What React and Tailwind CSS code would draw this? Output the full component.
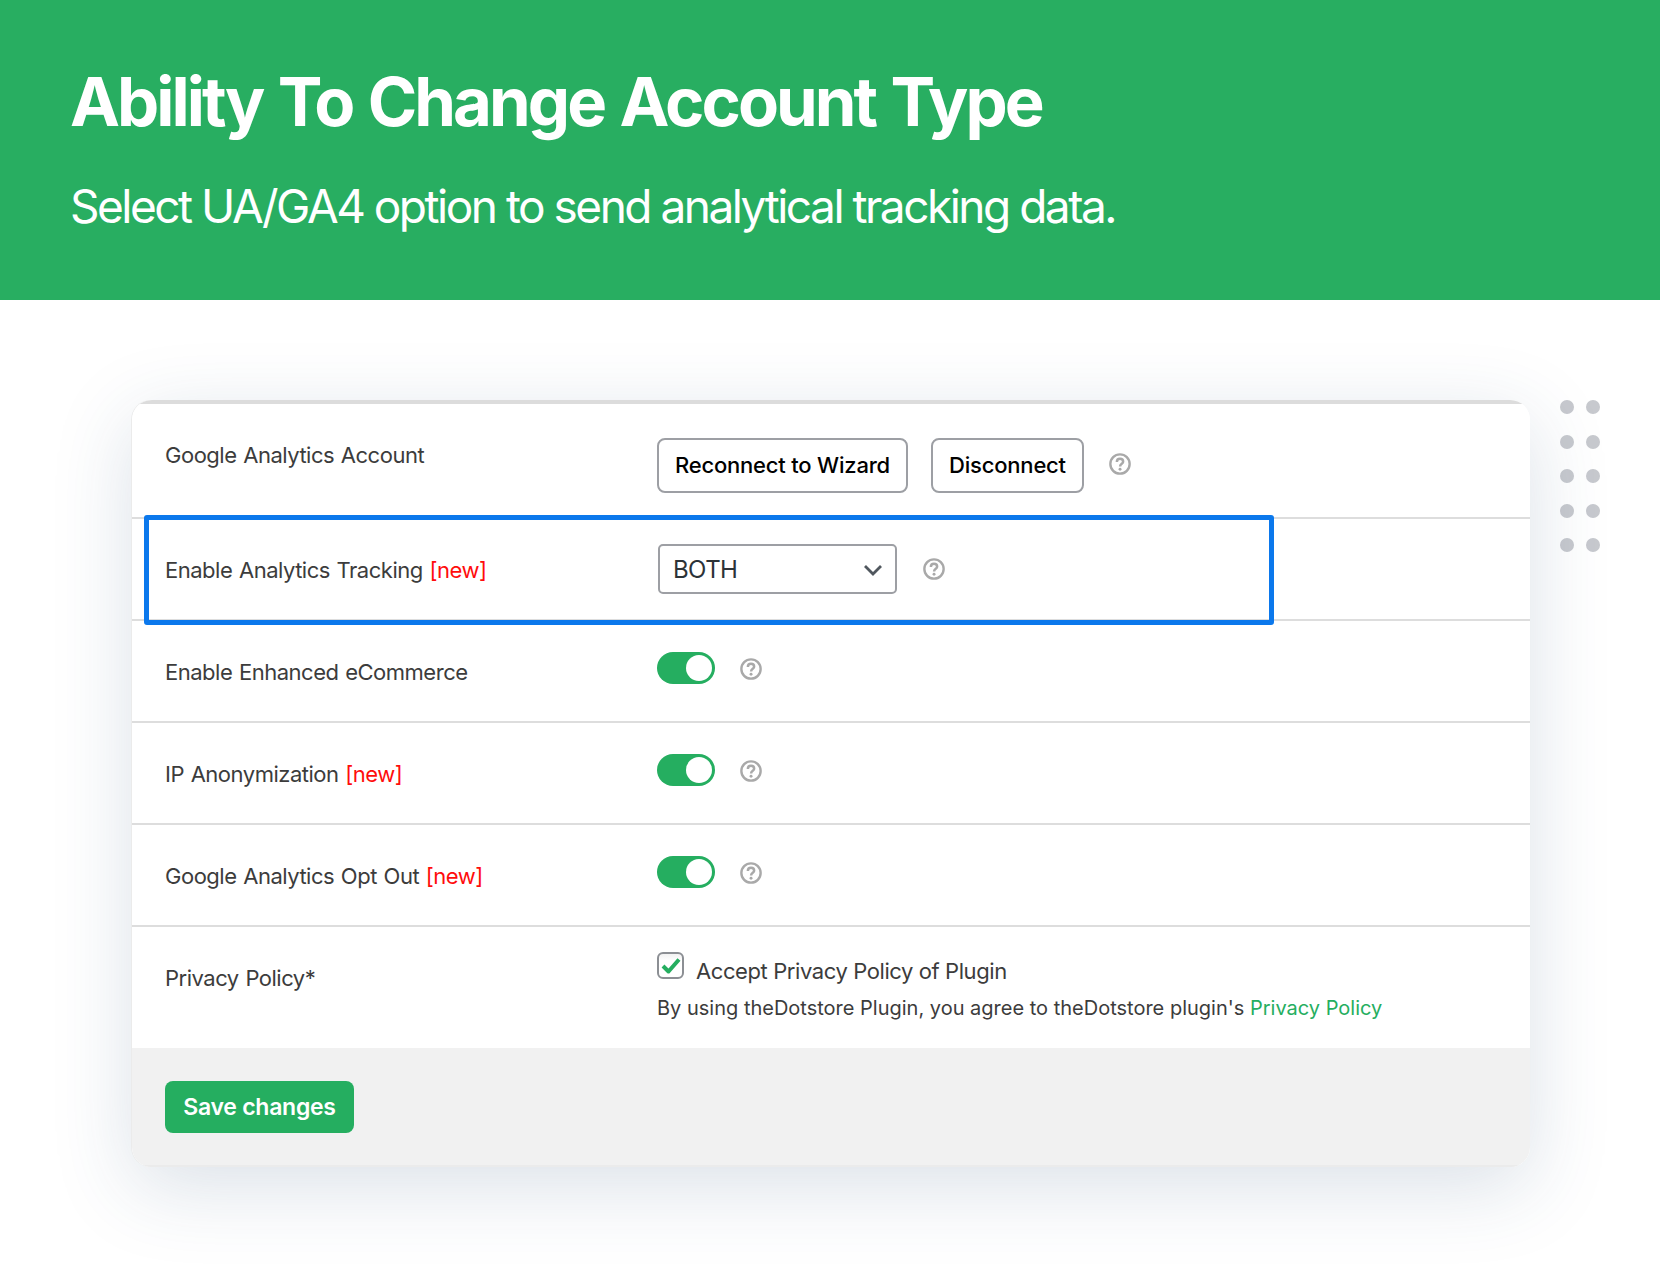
import React from "react";

function Help({ className = "" }) {
  return (
    <svg viewBox="0 0 24 24" className={`h-[26px] w-[26px] shrink-0 ${className}`} fill="none" stroke="#a9a9a9" strokeWidth="2.2">
      <circle cx="12" cy="12" r="8.9" />
      <path d="M9.100 10.100C9.100 8.300 10.400 7.200 12 7.200s2.900 1.100 2.900 2.700c0 1.900-2.800 2-2.800 4.300" strokeWidth="2.300" />
      <circle cx="12.050" cy="16.800" r="1.350" fill="#a9a9a9" stroke="none" />
    </svg>
  );
}

function Row({ label, isNew, className = "h-[102px] border-b-2", labelClass = "pt-[38px]", children }) {
  return (
    <div className={`flex border-[#dddddd] pl-[33px] ${className}`}>
      <div className={`w-[492px] shrink-0 whitespace-nowrap text-[22px] leading-[26px] tracking-[-0.49px] [word-spacing:1px] text-[#3c3c3c] ${labelClass}`}>
        <span>{label}</span>
        {isNew && <span className="text-[#ff0c0c]"> [new]</span>}
      </div>
      {children}
    </div>
  );
}

function Toggle() {
  return (
    <div className="flex pt-[31px]">
      <div className="flex h-8 w-[58px] justify-end rounded-full bg-[#25ae60] p-[3px]">
        <div className="h-[26px] w-[26px] rounded-full bg-white" />
      </div>
      <Help className="ml-[23px] mt-1" />
    </div>
  );
}

export default function App() {
  return (
    <div className="relative h-[1268px] w-[1660px] overflow-hidden bg-white font-['Inter',sans-serif]">
      <header className="h-[300px] bg-[#28ae61] pl-[70px] pt-[62px] text-white">
        <h1 className="whitespace-nowrap text-[67px] font-bold leading-[80px] tracking-[-2.95px] [word-spacing:2.4px]"><span>Ability To Change Account Type</span></h1>
        <p className="mt-[36px] whitespace-nowrap text-[46px] font-normal leading-[56px] tracking-[-2.5px]"><span>Select UA/GA4 option to send analytical tracking data.</span></p>
      </header>

      <div className="flex pl-[132px] pt-[100px]">
        <main className="relative h-[767px] w-[1398px] rounded-[20px] shadow-[-1px_0_0_#ebebeb,0_20px_80px_rgba(40,75,120,0.17)]">
          <div className="h-full overflow-hidden rounded-[20px] bg-white">
            <div className="h-1 bg-[#dcdcdc]" />
            <Row label="Google Analytics Account" className="h-[115px] border-b-2" labelClass="pt-[38px]">
              <div className="flex pt-[34px]">
                <button className="h-[55px] w-[251px] rounded-lg border-2 border-[#9d9fa4] text-[22px] font-medium tracking-[-0.2px] text-black"><span>Reconnect to Wizard</span></button>
                <button className="ml-[23px] h-[55px] w-[153px] rounded-lg border-2 border-[#9d9fa4] text-[22px] font-medium tracking-[-0.2px] text-black"><span>Disconnect</span></button>
                <Help className="ml-[23px] mt-[13px]" />
              </div>
            </Row>
            <Row label="Enable Analytics Tracking" isNew>
              <div className="flex pl-[1px] pt-[25px]">
                <div className="flex h-[50px] w-[239px] items-center justify-between rounded-[5px] border-2 border-[#9d9fa4] pl-[13px] pr-[12px] pt-px text-[24px] tracking-[-0.6px] text-[#2c3338]">
                  <span>BOTH</span>
                  <svg viewBox="0 0 20 12" className="mt-px h-[12px] w-[20px]" fill="none" stroke="#50575e" strokeWidth="2.800"><path d="M2 2l8 8 8-8" /></svg>
                </div>
                <Help className="ml-[24px] mt-[12px]" />
              </div>
            </Row>
            <Row label="Enable Enhanced eCommerce"><Toggle /></Row>
            <Row label="IP Anonymization" isNew><Toggle /></Row>
            <Row label="Google Analytics Opt Out" isNew><Toggle /></Row>
            <Row label="Privacy Policy*" className="h-[121px]">
              <div className="pt-[25px] text-[#3c3c3c]">
                <div className="flex">
                  <div className="flex h-[27px] w-[27px] items-center justify-center rounded-md border-2 border-[#8c8f94] bg-linear-to-b from-[#f2f2f2] to-white to-30%">
                    <svg viewBox="0 0 20 18" className="h-[18px] w-[20px] shrink-0" fill="none" stroke="#25ae60" strokeWidth="4" strokeLinejoin="round"><path d="M2 9l5.500 5.500L18 2.500" /></svg>
                  </div>
                  <span className="ml-[12px] mt-[6px] text-[22px] leading-[26px] tracking-[-0.41px]">Accept Privacy Policy of Plugin</span>
                </div>
                <p className="mt-[12px] whitespace-nowrap text-[20px] leading-[24px]"><span>By using theDotstore Plugin, you agree to theDotstore plugin's </span><span className="text-[#25ae60]">Privacy Policy</span></p>
              </div>
            </Row>
            <div className="h-[119px] border-b-2 border-[#ebebeb] bg-[#f1f1f1] pl-[33px] pt-[33px]">
              <button className="h-[52px] w-[189px] rounded-lg bg-[#25ae60] text-[23px] font-semibold tracking-[-0.27px] text-white"><span>Save changes</span></button>
            </div>
          </div>
          <div className="absolute left-[12px] top-[115px] h-[110px] w-[1130px] rounded-[3px] border-5 border-[#0b78ec]" />
        </main>
        <div className="ml-[30px] grid h-[152px] grid-cols-[14px_14px] content-between gap-x-[12px]">
          {Array.from({ length: 10 }, (_, i) => <div key={i} className="h-[14px] w-[14px] rounded-full bg-[#c7c9ce]" />)}
        </div>
      </div>
    </div>
  );
}
